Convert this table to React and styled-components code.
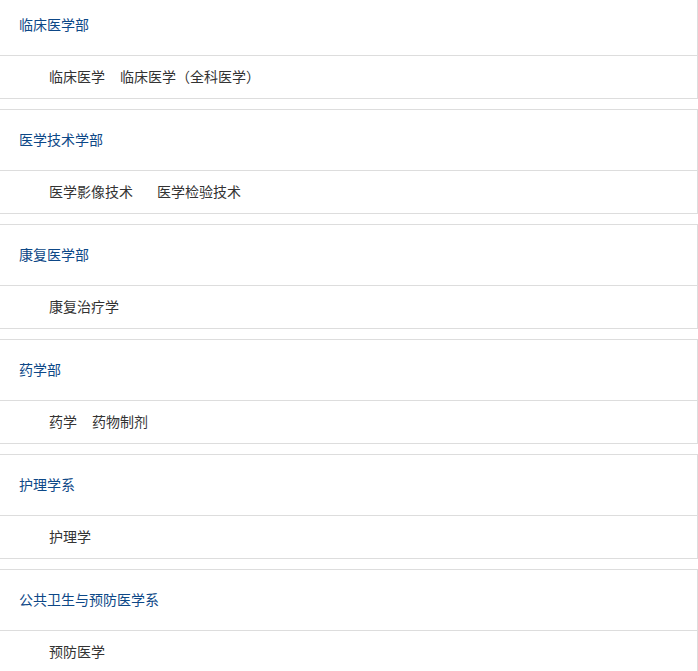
import React from "react";
import styled, { createGlobalStyle } from "styled-components";

const GlobalStyle = createGlobalStyle`
  html, body {
    margin: 0;
    padding: 0;
    background: #fff;
  }
  body {
    font-family: "Noto Sans CJK SC", "Microsoft YaHei", sans-serif;
    font-size: 14px;
  }
`;

const List = styled.div`
  display: flex;
  flex-direction: column;
  gap: 10px;
  margin-top: -6px;
`;

const Panel = styled.section`
  border: 1px solid #ddd;
  border-left: none;
  background: #fff;
`;

const PanelHead = styled.div`
  height: 61px;
  box-sizing: border-box;
  display: flex;
  align-items: center;
  padding: 0 0 2px 19px;
  border-bottom: 1px solid #ddd;
  color: #0d4887;
  font-size: 14px;
  line-height: 20px;
`;

const PanelBody = styled.div`
  height: 42px;
  box-sizing: border-box;
  display: flex;
  align-items: center;
  padding: 0 0 2px 49px;
  gap: 15px;
`;

const Major = styled.a`
  color: #333;
  font-size: 14px;
  line-height: 20px;
  text-decoration: none;
  margin-right: ${(p) => p.$extra || 0}px;
`;

const groups = [
  { name: "临床医学部", majors: [{ t: "临床医学" }, { t: "临床医学（全科医学）" }] },
  { name: "医学技术学部", majors: [{ t: "医学影像技术", extra: 9 }, { t: "医学检验技术" }] },
  { name: "康复医学部", majors: [{ t: "康复治疗学" }] },
  { name: "药学部", majors: [{ t: "药学" }, { t: "药物制剂" }] },
  { name: "护理学系", majors: [{ t: "护理学" }] },
  { name: "公共卫生与预防医学系", majors: [{ t: "预防医学" }] },
];

export default function App() {
  return (
    <>
      <GlobalStyle />
      <List>
        {groups.map((g) => (
          <Panel key={g.name}>
            <PanelHead>{g.name}</PanelHead>
            <PanelBody>
              {g.majors.map((m) => (
                <Major key={m.t} $extra={m.extra}>
                  {m.t}
                </Major>
              ))}
            </PanelBody>
          </Panel>
        ))}
      </List>
    </>
  );
}
